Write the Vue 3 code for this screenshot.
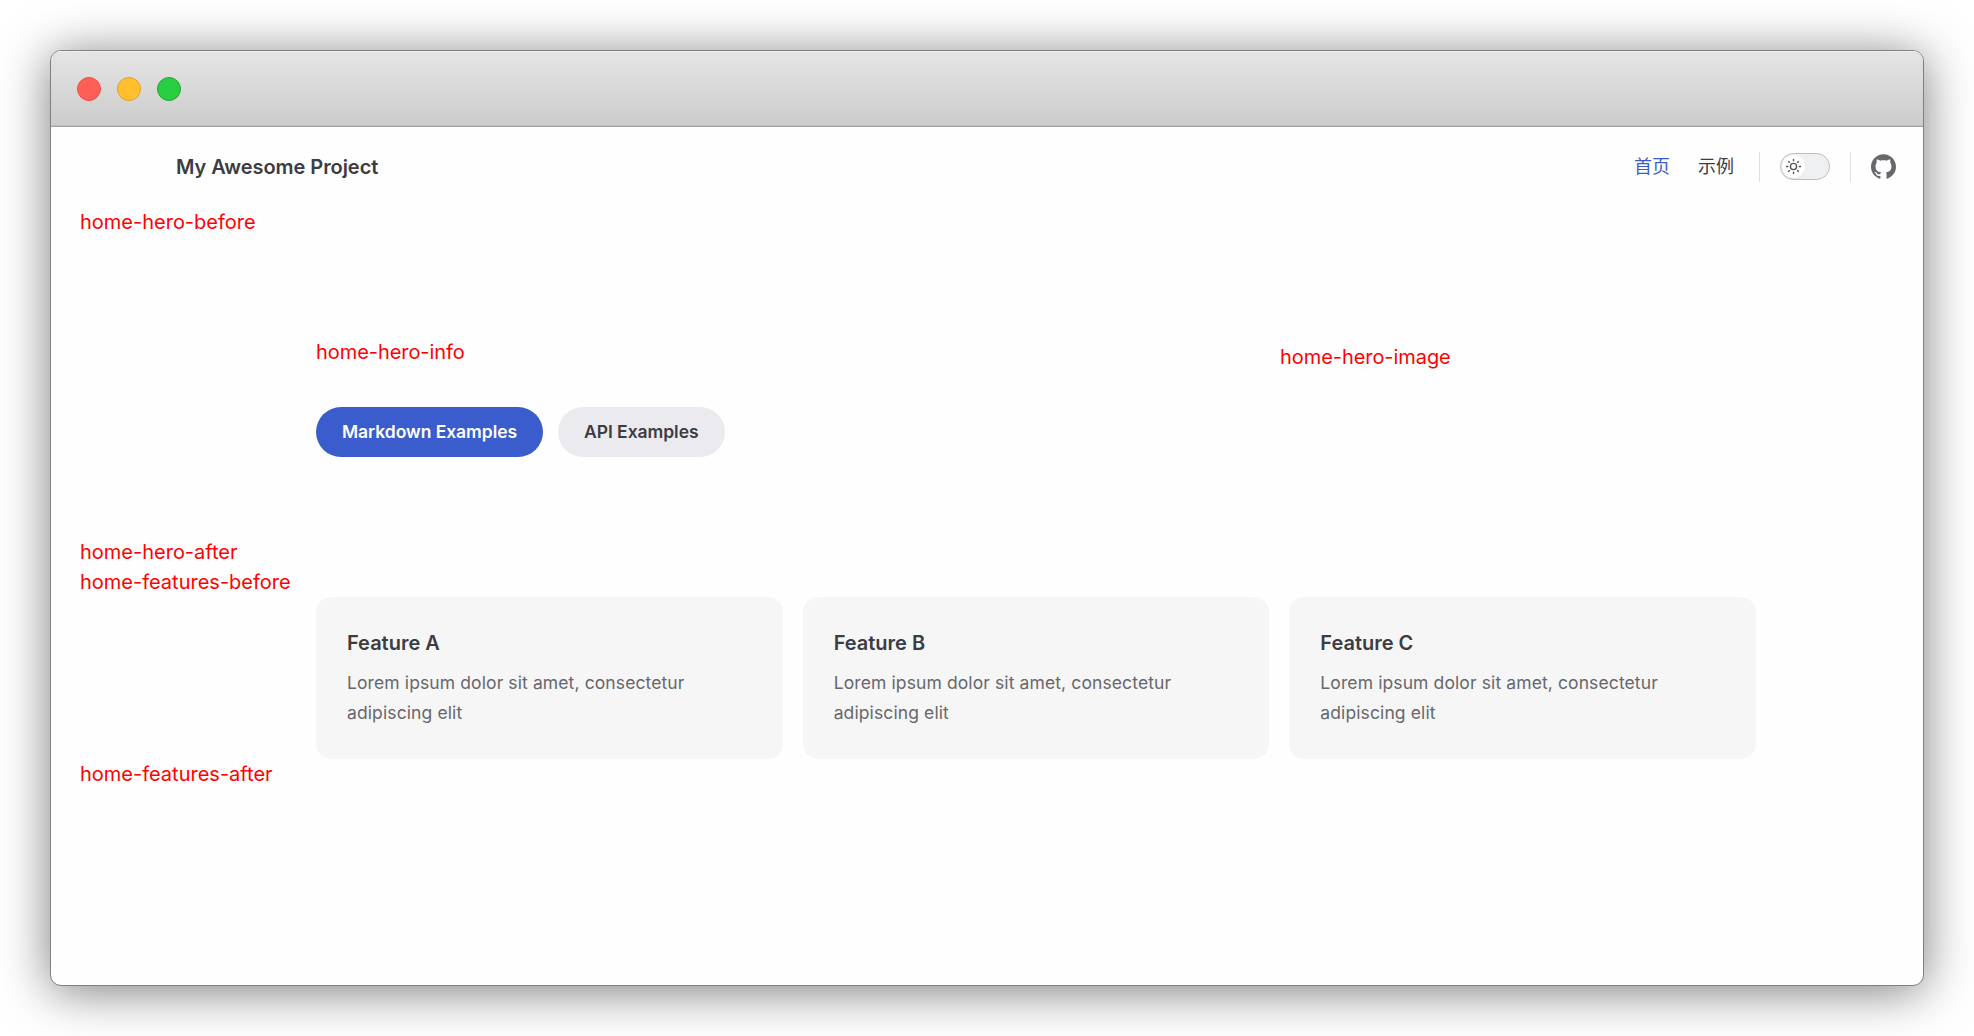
<script setup>
const links = [
  { text: '首页', active: true },
  { text: '示例', active: false },
]
const features = ['Feature A', 'Feature B', 'Feature C']
const rays = [0, 45, 90, 135, 180, 225, 270, 315]
</script>

<template>
  <div class="desktop">
    <div class="window">
      <div class="titlebar">
        <span class="dot red"></span>
        <span class="dot yellow"></span>
        <span class="dot green"></span>
      </div>
      <header class="nav">
        <div class="site-title">My Awesome Project</div>
        <nav class="menu">
          <a v-for="l in links" :key="l.text" class="link" :class="{ active: l.active }">{{ l.text }}</a>
        </nav>
        <span class="divider"></span>
        <span class="switch">
          <span class="check">
            <svg viewBox="0 0 24 24" width="15" height="15" fill="none" stroke="#55555b" stroke-width="2.2">
              <circle cx="12" cy="12" r="5" />
              <path v-for="r in rays" :key="r" d="M12 0v3.6" :transform="`rotate(${r} 12 12)`" />
            </svg>
          </span>
        </span>
        <span class="divider second"></span>
        <svg class="github" viewBox="0 0 24 24" width="25" height="25" fill="#67676c">
          <path d="M12 .297c-6.63 0-12 5.373-12 12 0 5.303 3.438 9.8 8.205 11.385.6.113.82-.258.82-.577 0-.285-.01-1.04-.015-2.04-3.338.724-4.042-1.61-4.042-1.61C4.422 18.07 3.633 17.7 3.633 17.7c-1.087-.744.084-.729.084-.729 1.205.084 1.838 1.236 1.838 1.236 1.07 1.835 2.809 1.305 3.495.998.108-.776.417-1.305.76-1.605-2.665-.3-5.466-1.332-5.466-5.93 0-1.31.465-2.38 1.235-3.22-.135-.303-.54-1.523.105-3.176 0 0 1.005-.322 3.3 1.23.96-.267 1.98-.399 3-.405 1.02.006 2.04.138 3 .405 2.28-1.552 3.285-1.23 3.285-1.23.645 1.653.24 2.873.12 3.176.765.84 1.23 1.91 1.23 3.22 0 4.61-2.805 5.625-5.475 5.92.42.36.81 1.096.81 2.22 0 1.606-.015 2.896-.015 3.286 0 .315.21.69.825.57C20.565 22.092 24 17.592 24 12.297c0-6.627-5.373-12-12-12" />
        </svg>
      </header>
      <main>
        <div class="slot">home-hero-before</div>
        <section class="hero">
          <div class="info">
            <div class="label">home-hero-info</div>
            <div class="actions">
              <a class="button brand">Markdown Examples</a>
              <a class="button alt">API Examples</a>
            </div>
          </div>
          <div class="label image">home-hero-image</div>
        </section>
        <div class="slot">home-hero-after</div>
        <div class="slot">home-features-before</div>
        <section class="features">
          <article v-for="f in features" :key="f" class="card">
            <h2>{{ f }}</h2>
            <p>Lorem ipsum dolor sit amet, consectetur adipiscing elit</p>
          </article>
        </section>
        <div class="slot">home-features-after</div>
      </main>
    </div>
  </div>
</template>

<style>
body { margin: 0; background: #fff; }
</style>

<style scoped>
* { box-sizing: border-box; }
.desktop {
  width: 1974px;
  height: 1036px;
  padding: 50px;
  overflow: hidden;
  font: 400 20px/30px Inter, "Noto Sans CJK SC", sans-serif;
  color: #3c3c43;
}
.window {
  height: 936px;
  border: 1px solid #808080;
  border-radius: 11px;
  background: #fefefe;
  overflow: hidden;
  box-shadow: 0 5px 50px rgba(0, 0, 0, 0.52);
}
.titlebar {
  height: 76px;
  display: flex;
  align-items: center;
  gap: 16px;
  padding: 0 26px;
  background: linear-gradient(#e5e5e5, #cccccc);
  border-bottom: 1px solid #a3a3a3;
  box-shadow: inset 0 1px #f0f0f0, inset 0 -1px #bdbdbd;
}
.dot { width: 24px; height: 24px; border-radius: 50%; border: 1px solid; }
.red { background: #ff5f57; border-color: #e9514a; }
.yellow { background: #ffbf2f; border-color: #dfa033; }
.green { background: #28cd41; border-color: #24a732; }
.nav { height: 80px; display: flex; align-items: center; padding: 0 27px 0 125px; }
.site-title { flex: 1; font-weight: 600; letter-spacing: -0.06px; }
.menu { display: flex; gap: 28px; margin: 0 25px 4px 0; }
.link { font-size: 18px; font-family: "Noto Sans CJK SC", sans-serif; font-weight: 400; }
.link.active { color: #3a5ccc; }
.divider { width: 1px; height: 30px; background: #e0e0e2; margin-right: 20px; }
.second { margin: 0 20px; }
.switch {
  width: 50px;
  height: 27px;
  margin-bottom: 1px;
  padding: 1px;
  border: 1px solid #bdbdbf;
  border-radius: 14px;
  background: #eff0f1;
}
.check {
  display: flex;
  width: 23px;
  height: 23px;
  align-items: center;
  justify-content: center;
  border-radius: 50%;
  background: #fff;
  box-shadow: 0 1px 2px rgba(0, 0, 0, 0.06);
}
.github { margin-bottom: 2px; }
.slot { padding-left: 29px; color: #f00; }
.hero { height: 300px; display: flex; padding: 100px 265px 0; color: #f00; }
.label { letter-spacing: -0.06px; }
.info { width: 964px; }
.actions { display: flex; gap: 15px; margin-top: 40px; }
.button {
  height: 50px;
  padding: 0 26px;
  border-radius: 25px;
  font-size: 17.5px;
  font-weight: 600;
  line-height: 50px;
  letter-spacing: -0.05px;
  white-space: nowrap;
}
.brand { background: #3a5ccc; color: #fff; }
.alt { background: #ebebef; color: #3c3c43; }
.image { padding-top: 5px; }
.features { display: grid; grid-template-columns: repeat(3, 1fr); gap: 20px; width: 1440px; margin-left: 265px; }
.card { height: 162px; padding: 31px; border-radius: 15px; background: #f6f6f7; }
h2 { margin: 0; font-size: 20px; line-height: 30px; font-weight: 600; }
p { margin: 10px 0 0; font-size: 17.5px; line-height: 30px; letter-spacing: 0.11px; color: #67676c; }
</style>
